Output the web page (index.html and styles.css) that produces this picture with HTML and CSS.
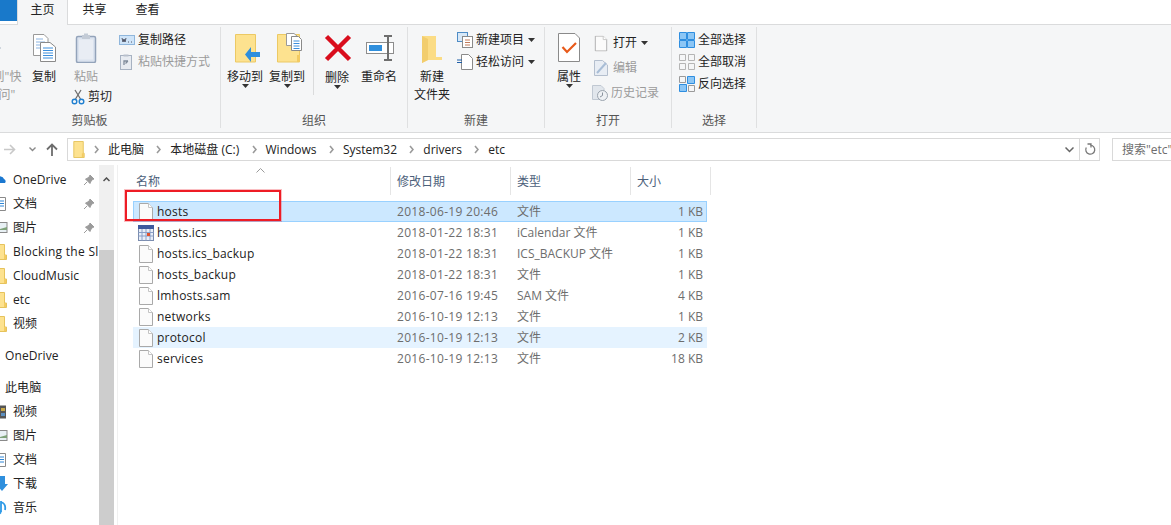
FILE: index.html
```html
<!DOCTYPE html>
<html lang="zh-CN">
<head>
    <meta charset="UTF-8">
    <meta name="viewport" content="width=device-width, initial-scale=1.0">
    <title>etc</title>
    <link rel="stylesheet" href="styles.css">
</head>
<body>
    <svg class="defs" width="0" height="0">
        <symbol id="file" viewBox="0 0 16 18">
            <path d="M1.5 .5H10.5L14.5 4.5V17.5H1.5Z" fill="#fbfbfb" stroke="#a9a9a9"/>
            <path d="M10.5 .5V4.5H14.5" fill="#fff" stroke="#c4c4c4"/>
        </symbol>
        <symbol id="folder" viewBox="0 0 12 18">
            <path d="M.5 .5H10.5V13H11.5V17.5H.5Z" fill="#fde28f" stroke="#e6c35c"/>
            <path d="M9 13H11V17H9Z" fill="#f3cb62"/>
        </symbol>
        <symbol id="navfolder" viewBox="0 0 10 16">
            <path d="M-4 .5H4.500V11H6.500V15.500H-4Z" fill="#fde28f" stroke="#e6c35c"/>
            <path d="M4 11H6V15H4Z" fill="#f3cb62"/>
        </symbol>
        <symbol id="caret" viewBox="0 0 7 4">
            <path d="M0 0H7L3.5 4Z" fill="#333"/>
        </symbol>
        <symbol id="chev" viewBox="0 0 5 9">
            <path d="M1 1L4 4.5L1 8" fill="none" stroke="#9a9a9a" stroke-width="1.6"/>
        </symbol>
        <symbol id="pin" viewBox="0 0 12 12">
            <path d="M7 1L11 5L9.500 5.500L7.500 8L7 9.500L2.500 5L4 4.500L6.500 2.500ZM4 8L1 11" fill="#9b9b9b" stroke="#9b9b9b"/>
        </symbol>
    </svg>

    <div class="tabs">
        <div class="tab-file"></div>
        <div class="tab tab-on">主页</div>
        <div class="tab">共享</div>
        <div class="tab">查看</div>
    </div>

    <div class="ribbon">
        <!-- 剪贴板 -->
        <div class="group g-clip">
            <div class="group-body">
                <div class="big big-pin off">
                    <svg class="ico" width="30" height="30" viewBox="0 0 30 30"><path d="M12 7L21 15L12 23L11 18H7V12H11Z" fill="#a9b6c6"/></svg>
                    <span>固定到"快<br>速访问"</span>
                </div>
                <div class="big big-copy">
                    <svg class="ico" width="30" height="30" viewBox="0 0 30 30">
                        <path d="M4.500 1.500H15L19 5.500V22.500H4.500Z" fill="#fff" stroke="#9a9a9a"/>
                        <path d="M7 6H14M7 9H16M7 12H16M7 15H16" stroke="#8bb4e2"/>
                        <path d="M11.500 9.500H21L26.500 14V28.500H11.500Z" fill="#fff" stroke="#8a8a8a"/>
                        <path d="M14 15H24M14 17.500H24M14 20H24M14 22.500H24M14 25H24" stroke="#3c8fdc"/>
                    </svg>
                    <span>复制</span>
                </div>
                <div class="paste-col">
                    <div class="big off">
                        <svg class="ico" width="30" height="30" viewBox="0 0 30 30">
                            <rect x="5.500" y="3.500" width="19" height="26" rx="1.500" fill="#dbe3ef" stroke="#93a3ba" stroke-width="1.500"/>
                            <rect x="8" y="6.500" width="14" height="20" fill="#e9edf4"/>
                            <path d="M11 4V2H13V.5H17V2H19V6H11Z" fill="#c3cbd6"/>
                        </svg>
                        <span>粘贴</span>
                    </div>
                    <div class="row cut">
                        <svg class="sm" width="14" height="16" viewBox="0 0 14 16">
                            <path d="M4 1L9.500 10M10 1L4.500 10" stroke="#6f6f6f" stroke-width="1.300"/>
                            <circle cx="3.500" cy="12.500" r="2.300" fill="none" stroke="#1f7fd0" stroke-width="1.400"/>
                            <circle cx="10.500" cy="12.500" r="2.300" fill="none" stroke="#1f7fd0" stroke-width="1.400"/>
                        </svg>
                        <span>剪切</span>
                    </div>
                </div>
                <div class="small-col clip-col">
                    <div class="row">
                        <svg class="sm" width="16" height="10" viewBox="0 0 16 10"><rect x=".5" y=".5" width="15" height="9" fill="#cfe4f8" stroke="#8fb6dc"/><path d="M3 3L4 7L5 4L6 7L7 3M9 7H10M12 7H13" fill="none" stroke="#334" stroke-width=".8"/></svg>
                        <span>复制路径</span>
                    </div>
                    <div class="row off">
                        <svg class="sm sm-12" width="12" height="16" viewBox="0 0 12 16"><rect x=".5" y="1.500" width="11" height="14" fill="#e7ebf1" stroke="#a7b2c2"/><path d="M3.500 1.500V0.500H8.500V2.500H3.500Z" fill="#b8c0cc"/><path d="M4 11V7H8M8 7L5.500 9.500" fill="none" stroke="#7f8b9b" stroke-width="1.300"/></svg>
                        <span>粘贴快捷方式</span>
                    </div>
                </div>
            </div>
            <div class="group-name">剪贴板</div>
        </div>

        <!-- 组织 -->
        <div class="group g-org">
            <div class="group-body">
                <div class="big w42">
                    <svg class="ico" width="30" height="30" viewBox="0 0 30 30">
                        <path d="M5.500 1.500H25.500V29H5.500Z" fill="#fde28f" stroke="#ecc964"/>
                        <path d="M30 19H21V14L15 21.500L21 29V24H30Z" fill="#2f8fdd"/>
                    </svg>
                    <span>移动到</span>
                    <svg class="drop" width="7" height="4"><use href="#caret"/></svg>
                </div>
                <div class="big w42">
                    <svg class="ico" width="30" height="30" viewBox="0 0 30 30">
                        <path d="M5.500 1.500H27.500V29H5.500Z" fill="#fde28f" stroke="#ecc964"/>
                        <path d="M25 22H28V29H25Z" fill="#f3cb62"/>
                        <path d="M14.500 .5H22L25 3V12.500H14.500Z" fill="#fff" stroke="#9a9a9a"/>
                        <path d="M19.500 3.500H26.500L29.500 6.500V17.500H19.500Z" fill="#fff" stroke="#8a8a8a"/>
                        <path d="M21.500 8H27.500M21.500 10.500H27.500M21.500 13H27.500M21.500 15.500H27.500" stroke="#3c8fdc"/>
                    </svg>
                    <span>复制到</span>
                    <svg class="drop" width="7" height="4"><use href="#caret"/></svg>
                </div>
                <div class="vline"></div>
                <div class="big w42 del">
                    <svg class="ico" width="30" height="30" viewBox="0 0 30 30"><path d="M4.500 3.500L27.500 26.500M27.500 3.500L4.500 26.500" stroke="#d90d1c" stroke-width="4.500"/></svg>
                    <span>删除</span>
                    <svg class="drop" width="7" height="4"><use href="#caret"/></svg>
                </div>
                <div class="big w42">
                    <svg class="ico" width="30" height="30" viewBox="0 0 30 30">
                        <rect x="2.500" y="9.500" width="27" height="11" fill="#fff" stroke="#8d8d8d"/>
                        <rect x="5" y="12" width="13" height="6" fill="#2f8fdd"/>
                        <path d="M20 3H28M24 3V27M20 27H28" fill="none" stroke="#6e6e6e" stroke-width="2"/>
                    </svg>
                    <span>重命名</span>
                </div>
            </div>
            <div class="group-name">组织</div>
        </div>

        <!-- 新建 -->
        <div class="group g-new">
            <div class="group-body">
                <div class="big w46">
                    <svg class="ico" width="30" height="30" viewBox="0 0 30 30">
                        <path d="M5 3H19V24H25V27H11L5 30Z" fill="#fbdc85"/>
                        <path d="M5 3L11 6V27L5 30Z" fill="#f2cd6d"/>
                    </svg>
                    <span>新建<br>文件夹</span>
                </div>
                <div class="small-col new-col">
                    <div class="row">
                        <svg class="sm" width="16" height="16" viewBox="0 0 16 16"><rect x=".5" y=".5" width="10" height="9" fill="#d8e8f7" stroke="#4e8cc6"/><rect x="5.500" y="4.500" width="10" height="11" fill="#fff" stroke="#8a8a8a"/><path d="M8 8H13M8 10.500H13M8 13H13" stroke="#c07a5a"/></svg>
                        <span>新建项目</span>
                        <svg class="drop-r" width="7" height="4"><use href="#caret"/></svg>
                    </div>
                    <div class="row">
                        <svg class="sm" width="16" height="16" viewBox="0 0 16 16"><path d="M4.500 .5H11.500L15.500 4.500V15.500H4.500Z" fill="#fff" stroke="#8a8a8a"/><path d="M0 6H5M0 8.500H5" stroke="#1f5fa8" stroke-width="1.200"/></svg>
                        <span>轻松访问</span>
                        <svg class="drop-r" width="7" height="4"><use href="#caret"/></svg>
                    </div>
                </div>
            </div>
            <div class="group-name">新建</div>
        </div>

        <!-- 打开 -->
        <div class="group g-open">
            <div class="group-body">
                <div class="big w46">
                    <svg class="ico" width="30" height="30" viewBox="0 0 30 30">
                        <path d="M4.500 .5H21L25.500 5V28.500H4.500Z" fill="#fff" stroke="#8a8a8a"/>
                        <path d="M8.500 14L13 19L22 10" fill="none" stroke="#e85a1a" stroke-width="2.200"/>
                    </svg>
                    <span>属性</span>
                    <svg class="drop" width="7" height="4"><use href="#caret"/></svg>
                </div>
                <div class="small-col open-col">
                    <div class="row">
                        <svg class="sm" width="14" height="17" viewBox="0 0 16 18"><use href="#file"/></svg>
                        <span>打开</span>
                        <svg class="drop-r" width="7" height="4"><use href="#caret"/></svg>
                    </div>
                    <div class="row off">
                        <svg class="sm" width="14" height="16" viewBox="0 0 14 16"><path d="M.5 .5H8.500L13.500 5V15.500H.5Z" fill="#e8edf4" stroke="#b4bfce"/><path d="M3 13L12 3" stroke="#a8bdd6" stroke-width="2"/></svg>
                        <span>编辑</span>
                    </div>
                    <div class="row off">
                        <svg class="sm" width="16" height="16" viewBox="0 0 16 16"><path d="M.5 .5H9L12 3.500V14.500H.5Z" fill="#e1e6ec" stroke="#c0c8d2"/><circle cx="10.500" cy="10.500" r="5" fill="#eef1f4" stroke="#9aa3ad"/><path d="M10.500 7.500V10.500L8 12" fill="none" stroke="#8a939e"/></svg>
                        <span>历史记录</span>
                    </div>
                </div>
            </div>
            <div class="group-name">打开</div>
        </div>

        <!-- 选择 -->
        <div class="group g-sel">
            <div class="group-body">
                <div class="small-col sel-col">
                    <div class="row">
                        <svg class="sm" width="16" height="16" viewBox="0 0 16 16"><path d="M.5 .5H7.500V7.500H.5ZM8.500 .5H15.500V7.500H8.500ZM.5 8.500H7.500V15.500H.5ZM8.500 8.500H15.500V15.500H8.500Z" fill="#8cc6f5" stroke="#2e8ee0"/></svg>
                        <span>全部选择</span>
                    </div>
                    <div class="row">
                        <svg class="sm" width="16" height="16" viewBox="0 0 16 16"><path d="M.5 .5H6.500V6.500H.5ZM9.500 .5H15.500V6.500H9.500ZM.5 9.500H6.500V15.500H.5ZM9.500 9.500H15.500V15.500H9.500Z" fill="none" stroke="#b5b5b5"/></svg>
                        <span>全部取消</span>
                    </div>
                    <div class="row">
                        <svg class="sm" width="16" height="16" viewBox="0 0 16 16"><path d="M.5 .5H6.500V6.500H.5ZM9.500 9.500H15.500V15.500H9.500Z" fill="none" stroke="#9a9a9a"/><path d="M8.500 .5H15.500V7.500H8.500ZM.5 8.500H7.500V15.500H.5Z" fill="#8cc6f5" stroke="#2e8ee0"/></svg>
                        <span>反向选择</span>
                    </div>
                </div>
            </div>
            <div class="group-name">选择</div>
        </div>
    </div>

    <!-- 地址栏 -->
    <div class="navbar">
        <svg class="nav-fwd" width="12" height="11" viewBox="0 0 12 11"><path d="M0 5.500H10M6 1L10.500 5.500L6 10" fill="none" stroke="#c8c8c8" stroke-width="1.600"/></svg>
        <svg class="nav-down" width="7" height="5" viewBox="0 0 7 5"><path d="M.5 .5L3.500 3.500L6.500 .5" fill="none" stroke="#8a8a8a" stroke-width="1.400"/></svg>
        <svg class="nav-up" width="12" height="13" viewBox="0 0 12 13"><path d="M6 13V2M1 6.500L6 1.500L11 6.500" fill="none" stroke="#6d6d6d" stroke-width="1.800"/></svg>
        <div class="address">
            <svg class="addr-folder" width="12" height="17"><use href="#folder"/></svg>
            <svg class="chev" width="5" height="9"><use href="#chev"/></svg><span>此电脑</span>
            <svg class="chev" width="5" height="9"><use href="#chev"/></svg><span>本地磁盘 (C:)</span>
            <svg class="chev" width="5" height="9"><use href="#chev"/></svg><span>Windows</span>
            <svg class="chev" width="5" height="9"><use href="#chev"/></svg><span>System32</span>
            <svg class="chev" width="5" height="9"><use href="#chev"/></svg><span>drivers</span>
            <svg class="chev" width="5" height="9"><use href="#chev"/></svg><span>etc</span>
            <svg class="addr-drop" width="9" height="6" viewBox="0 0 9 6"><path d="M.5 .5L4.500 4.500L8.500 .5" fill="none" stroke="#666" stroke-width="1.500"/></svg>
            <div class="refresh">
                <svg width="12" height="13" viewBox="0 0 12 13"><path d="M3.500 1H7V4.500M6 2.200A4.500 4.500 0 1 1 2.300 4.500" fill="none" stroke="#777" stroke-width="1.300"/></svg>
            </div>
        </div>
        <div class="search">搜索"etc"</div>
    </div>

    <div class="main">
        <!-- 左侧导航 -->
        <div class="side">
            <div class="nav-list">
                <div class="nav-item"><svg class="nav-ico" width="10" height="10" viewBox="0 0 10 10"><path d="M-6 8A3 3 0 0 1 -3 3A4 4 0 0 1 4 4A2.500 2.500 0 0 1 5 8Z" fill="#1b78d0"/></svg><span>OneDrive</span><svg class="nav-pin" width="12" height="12"><use href="#pin"/></svg></div>
                <div class="nav-item"><svg class="nav-ico" width="10" height="14" viewBox="0 0 10 14"><path d="M-3 .5H5.500V13.500H-3Z" fill="#fff" stroke="#8a8a8a"/><path d="M0 4H4M0 6.500H4M0 9H4" stroke="#2e86d6"/></svg><span>文档</span><svg class="nav-pin" width="12" height="12"><use href="#pin"/></svg></div>
                <div class="nav-item"><svg class="nav-ico" width="10" height="12" viewBox="0 0 10 12"><rect x="-4" y=".5" width="11" height="10" fill="#e8f0f4" stroke="#8a8a8a"/><path d="M0 7L7 5V8H0Z" fill="#7fa27a"/></svg><span>图片</span><svg class="nav-pin" width="12" height="12"><use href="#pin"/></svg></div>
                <div class="nav-item"><svg class="nav-ico" width="10" height="16"><use href="#navfolder"/></svg><span class="cut-text">Blocking the Sl</span></div>
                <div class="nav-item"><svg class="nav-ico" width="10" height="16"><use href="#navfolder"/></svg><span>CloudMusic</span></div>
                <div class="nav-item"><svg class="nav-ico" width="10" height="16"><use href="#navfolder"/></svg><span>etc</span></div>
                <div class="nav-item"><svg class="nav-ico" width="10" height="16"><use href="#navfolder"/></svg><span>视频</span></div>
                <div class="nav-item nav-root gap8"><span>OneDrive</span></div>
                <div class="nav-item nav-root gap8"><span>此电脑</span></div>
                <div class="nav-item"><svg class="nav-ico" width="10" height="14" viewBox="0 0 10 14"><rect x="-3" y=".5" width="9" height="13" fill="#555"/><rect x="1" y="3" width="4" height="3" fill="#c8a848"/><rect x="1" y="8" width="4" height="3" fill="#5b8fc0"/></svg><span>视频</span></div>
                <div class="nav-item"><svg class="nav-ico" width="10" height="12" viewBox="0 0 10 12"><rect x="-4" y=".5" width="11" height="10" fill="#e8f0f4" stroke="#8a8a8a"/><path d="M0 7L7 5V8H0Z" fill="#7fa27a"/></svg><span>图片</span></div>
                <div class="nav-item"><svg class="nav-ico" width="10" height="14" viewBox="0 0 10 14"><path d="M-3 .5H5.500V13.500H-3Z" fill="#fff" stroke="#8a8a8a"/><path d="M0 4H4M0 6.500H4M0 9H4" stroke="#2e86d6"/></svg><span>文档</span></div>
                <div class="nav-item"><svg class="nav-ico" width="10" height="16" viewBox="0 0 10 16"><path d="M0 0H5V8H8L2 15L-4 8H0Z" fill="#2f8fdd"/></svg><span>下载</span></div>
                <div class="nav-item"><svg class="nav-ico" width="10" height="16" viewBox="0 0 10 16"><path d="M1 1V12M1 2C4 3 6 5 5 10" fill="none" stroke="#2f9be6" stroke-width="1.800"/><circle cx="-1" cy="12" r="2.500" fill="#2f9be6"/></svg><span>音乐</span></div>
            </div>
            <div class="scrollbar">
                <div class="scroll-up"><svg width="7" height="5" viewBox="0 0 7 5"><path d="M.5 4L3.500 1L6.500 4" fill="none" stroke="#505050" stroke-width="1.500"/></svg></div>
                <div class="scroll-thumb"></div>
            </div>
        </div>

        <!-- 文件列表 -->
        <div class="files">
            <svg class="sort" width="9" height="5" viewBox="0 0 9 5"><path d="M.5 4.500L4.500 .5L8.500 4.500" fill="none" stroke="#9a9a9a"/></svg>
            <div class="head">
                <div class="col-name">名称</div>
                <div class="col-date">修改日期</div>
                <div class="col-type">类型</div>
                <div class="col-size">大小</div>
            </div>
            <div class="rows">
                <div class="file-row selected">
                    <div class="col-name"><svg width="16" height="18"><use href="#file"/></svg><span>hosts</span></div>
                    <div class="col-date">2018-06-19 20:46</div><div class="col-type">文件</div><div class="col-size">1 KB</div>
                </div>
                <div class="file-row">
                    <div class="col-name">
                        <svg width="16" height="16" viewBox="0 0 16 16"><rect x=".5" y=".5" width="15" height="15" fill="#e8eef8" stroke="#7b8cae"/><rect x="0" y="0" width="16" height="4" fill="#3d5a9e"/><path d="M.5 7.500H15.500M.5 11H15.500M4 4V15.500M8 4V15.500M12 4V15.500" stroke="#8aa0c8"/><rect x="9" y="8" width="3" height="3" fill="#e2502a"/></svg>
                        <span>hosts.ics</span>
                    </div>
                    <div class="col-date">2018-01-22 18:31</div><div class="col-type">iCalendar 文件</div><div class="col-size">1 KB</div>
                </div>
                <div class="file-row">
                    <div class="col-name"><svg width="16" height="18"><use href="#file"/></svg><span>hosts.ics_backup</span></div>
                    <div class="col-date">2018-01-22 18:31</div><div class="col-type">ICS_BACKUP 文件</div><div class="col-size">1 KB</div>
                </div>
                <div class="file-row">
                    <div class="col-name"><svg width="16" height="18"><use href="#file"/></svg><span>hosts_backup</span></div>
                    <div class="col-date">2018-01-22 18:31</div><div class="col-type">文件</div><div class="col-size">1 KB</div>
                </div>
                <div class="file-row">
                    <div class="col-name"><svg width="16" height="18"><use href="#file"/></svg><span>lmhosts.sam</span></div>
                    <div class="col-date">2016-07-16 19:45</div><div class="col-type">SAM 文件</div><div class="col-size">4 KB</div>
                </div>
                <div class="file-row">
                    <div class="col-name"><svg width="16" height="18"><use href="#file"/></svg><span>networks</span></div>
                    <div class="col-date">2016-10-19 12:13</div><div class="col-type">文件</div><div class="col-size">1 KB</div>
                </div>
                <div class="file-row hovered">
                    <div class="col-name"><svg width="16" height="18"><use href="#file"/></svg><span>protocol</span></div>
                    <div class="col-date">2016-10-19 12:13</div><div class="col-type">文件</div><div class="col-size">2 KB</div>
                </div>
                <div class="file-row">
                    <div class="col-name"><svg width="16" height="18"><use href="#file"/></svg><span>services</span></div>
                    <div class="col-date">2016-10-19 12:13</div><div class="col-type">文件</div><div class="col-size">18 KB</div>
                </div>
            </div>
            <!-- 截图上的红框 -->
            <div class="redbox"></div>
        </div>
    </div>
</body>
</html>
```

FILE: styles.css
```css
*{box-sizing: border-box;}
html,body{margin: 0; height: 100%; overflow: hidden;}
body{background: #fff; color: #222; width: 1171px; height: 525px; font: 12px/16px "Open Sans", "Noto Sans CJK SC", sans-serif; display: flex; flex-direction: column;}
svg{display: block; flex: none;}
.defs{position: absolute;}

/* tabs */
.tabs{height: 25px; display: flex; border-bottom: 1px solid #dadbdc; flex: none;}
.tab-file{width: 17px; height: 21px; background: #1979ca;}
.tab{width: 53px; height: 24px; text-align: center; line-height: 19px;}
.tab-on{width: 51px; height: 25px; background: #f5f6f7; border: 1px solid #dadbdc; border-top: 0; border-bottom: 0;}

/* ribbon */
.ribbon{height: 108px; background: #f5f6f7; border-bottom: 1px solid #dadbdc; display: flex; padding-top: 2px; flex: none; overflow: hidden;}
.group{display: flex; flex-direction: column; border-right: 1px solid #dfe0e1; height: 101px; flex: none;}
.group-body{flex: 1; display: flex; min-height: 0;}
.group-name{height: 16px; line-height: 18px; text-align: center; color: #555;}
.g-clip{width: 221px;}
.g-clip .group-name{margin-left: -41px;}
.g-org{width: 187px;}
.g-org .group-body{padding-left: 3px;}
.g-new{width: 137px;}
.g-open{width: 127px;}
.g-sel{width: 85px;}

.big{display: flex; flex-direction: column; align-items: center; text-align: center; padding-top: 6px; line-height: 18px;}
.big .ico{margin-bottom: 5px;}
.big .drop{margin-top: -2px;}
.big-pin{width: 52px; margin-left: -31px; margin-right: 2px; flex: none; white-space: nowrap;}
.big-copy{width: 42px;}
.paste-col{width: 42px; display: flex; flex-direction: column;}
.paste-col .cut{margin: 3px 0 0 6px; width: 44px;}
.w42{width: 42px;}
.w46{width: 46px; margin-left: 1px;}
.off{color: #9b9b9b;}
.del .ico{margin-bottom: 6px;}

.vline{width: 1px; height: 55px; margin: 13px 2px 0 5px; background: #dadbdc;}

.small-col{display: flex; flex-direction: column; gap: 6px;}
.row{display: flex; align-items: center; gap: 3px; height: 16px; white-space: nowrap;}
.sm-12{margin: 0 3px 0 1px;}
.clip-col{margin: 5px 0 0 12px; width: 92px;}
.new-col{margin: 5px 0 0 2px;}
.open-col{margin: 8px 0 0; gap: 9px;}
.open-col .row:nth-child(1){padding-left: 2px;}
.open-col .row:nth-child(1) .sm{margin-right: 2px;}
.open-col .row:nth-child(2){padding-left: 2px;}
.open-col .row:nth-child(2) .sm{margin-right: 2px;}
.sel-col{margin: 5px 0 0 7px;}
.drop-r{margin-left: 1px;}

/* address bar */
.navbar{height: 23px; margin-top: 5px; display: flex; align-items: center; flex: none;}
.nav-fwd{margin-left: 4px;}
.nav-down{margin-left: 13px;}
.nav-up{margin-left: 10px;}
.address{margin-left: 9px; width: 1033px; height: 23px; border: 1px solid #d9d9d9; display: flex; align-items: center; color: #222;}
.addr-folder{margin: 0 9px 0 5px;}
.address .chev{margin-right: 9px;}
.address span{margin-right: 12.3px;}
.addr-drop{margin-left: auto; margin-right: 5px;}
.refresh{width: 20px; height: 21px; border-left: 1px solid #d9d9d9; display: flex; align-items: center; justify-content: center;}
.search{margin-left: 12px; flex: 1; height: 23px; border: 1px solid #d9d9d9; border-right: 0; padding-left: 9px; line-height: 21px; color: #6d6d6d; white-space: nowrap; overflow: hidden;}

/* main */
.main{flex: 1; display: flex; min-height: 0; margin-top: 4px;}
.side{width: 118px; flex: none; display: flex; border-right: 1px solid #f0f0f0;}
.nav-list{width: 99px; flex: none; padding-top: 3px; overflow: hidden; letter-spacing: .1px;}
.nav-item{height: 24px; display: flex; align-items: center; white-space: nowrap; position: relative; padding-right: 4px;}
.nav-item span{margin-left: 3px;}
.nav-item .cut-text{width: 86px; overflow: hidden; flex: none; letter-spacing: .3px;}
.nav-pin{margin-left: auto;}
.nav-root{padding-left: 2px;}
.gap8{margin-top: 8px;}
.scrollbar{width: 15px; flex: none; background: #f0f0f0; display: flex; flex-direction: column;}
.scroll-up{height: 85px; padding: 12px 0 0 4px;}
.scroll-thumb{flex: 1; background: #cdcdcd;}

.files{flex: 1; padding: 2px 0 0 15px; position: relative;}
.sort{position: absolute; left: 138px; top: 3px;}
.head{display: flex; height: 28px; color: #4c607a; width: 578px; line-height: 29px;}
.head > div{border-right: 1px solid #e5e5e5; padding-left: 3px;}
.head .col-name{width: 258px;}
.head .col-date{width: 120px; padding-left: 6px;}
.head .col-type{width: 120px; padding-left: 6px;}
.head .col-size{width: 80px; padding-left: 6px;}
.rows{margin-top: 6px; width: 574px;}
.file-row{height: 21px; display: flex; align-items: center; color: #6d6d6d; border: 1px solid transparent;}
.selected{background: #cce8ff; border-color: #99d1ff;}
.hovered{background: #e5f3ff; border-color: #e5f3ff;}
.file-row .col-name{width: 256px; display: flex; align-items: center; padding-left: 4px; color: #222; gap: 3px; letter-spacing: .22px;}
.file-row .col-date{width: 120px; padding-left: 7px; letter-spacing: .3px;}
.file-row .col-type{width: 120px; padding-left: 7px;}
.file-row .col-size{width: 73px; text-align: right;}
.redbox{position: absolute; left: 7px; top: 25px; width: 156px; height: 31px; border: 2px solid #ee1c25; box-shadow: 0 0 0 1px rgba(240, 70, 80, .35);}
```
